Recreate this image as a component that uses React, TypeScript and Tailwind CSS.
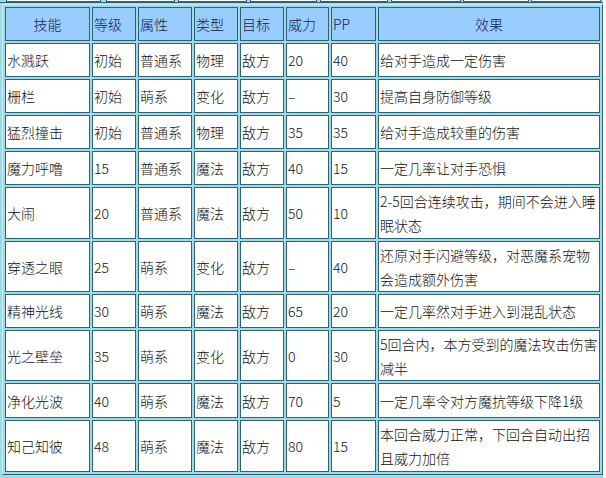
import React from "react";

type Row = { cells: (string | string[])[]; h: string };

const rows: Row[] = [
  { cells: ["水溅跃", "初始", "普通系", "物理", "敌方", "20", "40", "给对手造成一定伤害"], h: "h-[34px]" },
  { cells: ["栅栏", "初始", "萌系", "变化", "敌方", "–", "30", "提高自身防御等级"], h: "h-[34px]" },
  { cells: ["猛烈撞击", "初始", "普通系", "物理", "敌方", "35", "35", "给对手造成较重的伤害"], h: "h-[34px]" },
  { cells: ["魔力呼噜", "15", "普通系", "魔法", "敌方", "40", "15", "一定几率让对手恐惧"], h: "h-[34px]" },
  { cells: ["大闹", "20", "普通系", "魔法", "敌方", "50", "10", ["2-5回合连续攻击，期间不会进入睡", "眠状态"]], h: "h-[52px]" },
  { cells: ["穿透之眼", "25", "萌系", "变化", "敌方", "–", "40", ["还原对手闪避等级，对恶魔系宠物", "会造成额外伤害"]], h: "h-[51px]" },
  { cells: ["精神光线", "30", "萌系", "魔法", "敌方", "65", "20", "一定几率然对手进入到混乱状态"], h: "h-[34px]" },
  { cells: ["光之壁垒", "35", "萌系", "变化", "敌方", "0", "30", ["5回合内，本方受到的魔法攻击伤害", "减半"]], h: "h-[51px]" },
  { cells: ["净化光波", "40", "萌系", "魔法", "敌方", "70", "5", "一定几率令对方魔抗等级下降1级"], h: "h-[35px]" },
  { cells: ["知己知彼", "48", "萌系", "魔法", "敌方", "80", "15", ["本回合威力正常，下回合自动出招", "且威力加倍"]], h: "h-[52px]" },
];

const widths = ["w-[85px]", "w-[44px]", "w-[54px]", "w-[44px]", "w-[44px]", "w-[43px]", "w-[45px]", "w-[222px]"];
const headers = ["技能", "等级", "属性", "类型", "目标", "威力", "PP", "效果"];

const font = { fontFamily: '"Noto Sans CJK SC", "Liberation Sans", sans-serif' };

const topCells = [
  { w: "w-[95px]", ml: "ml-[6px]" },
  { w: "w-[69px]", ml: "ml-[5px]" },
  { w: "w-[69px]", ml: "ml-[3px]" },
  { w: "w-[67px]", ml: "ml-[3px]" },
  { w: "w-[68px]", ml: "ml-[3px]" },
  { w: "w-[70px]", ml: "ml-[3px]" },
  { w: "w-[66px]", ml: "ml-[2px]" },
  { w: "w-[70px]", ml: "ml-[2px]" },
];

export default function App() {
  return (
    <div className="w-[606px] h-[478px] bg-white overflow-hidden" style={font}>
      <div className="w-[603px] h-[478px] bg-[#9fdbe6] flex flex-col">
        {/* previous table remnant */}
        <div className="h-[3px] flex border-b border-[#2f6275]">
          {topCells.map((c, i) => (
            <div key={i} className={`${c.w} ${c.ml} h-[2px] bg-white border-x border-b border-[#2f6275]`} />
          ))}
        </div>
        {/* main table */}
        <div className="ml-[2px] mt-[1px] w-[601px] border border-t-[#c9eef5] border-l-[#c9eef5] border-r-[#2f6275] border-b-[#2f6275] p-[2px] flex flex-col gap-[2px]">
          <div className="flex gap-[2px] h-[34px]">
            {headers.map((h, i) => (
              <div
                key={i}
                className={`${widths[i]} h-full shrink-0 bg-[#99ccff] border border-[#2f6275] flex items-center ${
                  i === 0 || i === 7 ? "justify-center" : "justify-start pl-[1px]"
                } text-[14px] leading-[24px] font-light text-[#14234a]`}
              >
                {h}
              </div>
            ))}
          </div>
          {rows.map((r, ri) => (
            <div key={ri} className={`flex gap-[2px] ${r.h}`}>
              {r.cells.map((c, ci) => (
                <div
                  key={ci}
                  className={`${widths[ci]} h-full shrink-0 bg-white border border-[#2f6275] flex flex-col justify-center pl-[1px] text-[14px] leading-[24px] font-light text-[#111111] whitespace-nowrap overflow-hidden`}
                >
                  {Array.isArray(c) ? c.map((l, li) => <div key={li}>{l}</div>) : <div>{c}</div>}
                </div>
              ))}
            </div>
          ))}
        </div>
      </div>
    </div>
  );
}
